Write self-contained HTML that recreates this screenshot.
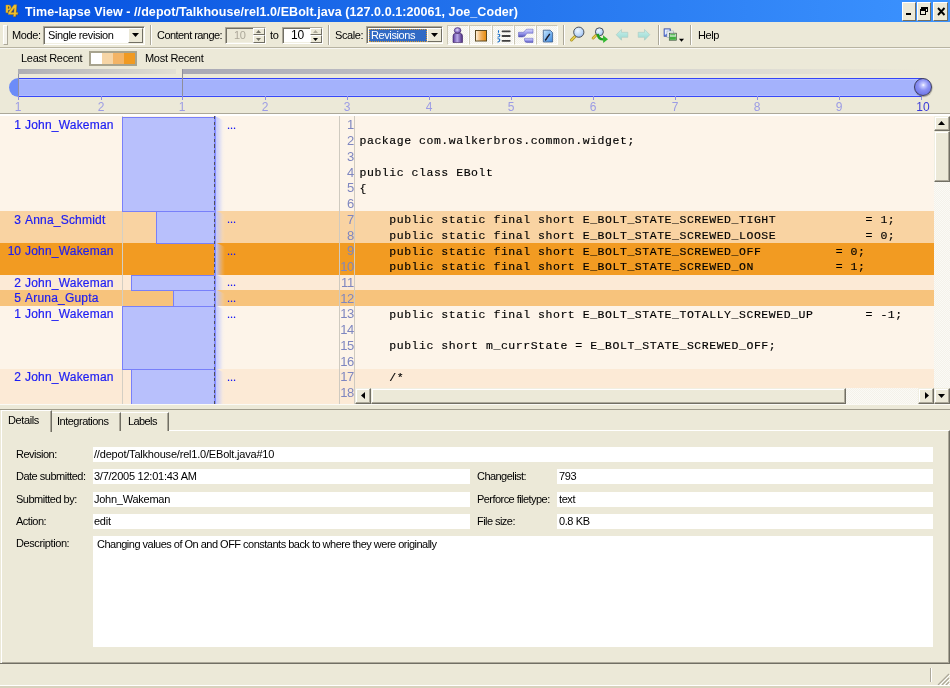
<!DOCTYPE html><html><head><meta charset="utf-8"><style>
*{margin:0;padding:0;box-sizing:border-box}
html,body{width:950px;height:688px;overflow:hidden;background:#ECE9D8;font-family:"Liberation Sans",sans-serif;font-size:11px;color:#000;position:relative}
.a{position:absolute}
#root{position:absolute;left:0;top:0;width:950px;height:688px;will-change:transform}
.tb{background:#ECE9D8;border-top:1px solid #fff;border-left:1px solid #fff;border-right:1px solid #716F64;border-bottom:1px solid #716F64}
.l{position:absolute;white-space:nowrap;letter-spacing:-0.4px;font-size:11px;line-height:13px}
.sep{position:absolute;top:25px;height:20px;width:2px;border-left:1px solid #ACA899;border-right:1px solid #fff}
.code{position:absolute;font-family:"Liberation Mono",monospace;-webkit-text-stroke:0.15px #000;font-size:11.5px;letter-spacing:0.54px;white-space:pre;color:#000;line-height:15.8px}
.ln{position:absolute;font-size:13px;letter-spacing:-0.3px;color:#7E86C0;text-align:right;width:20px;line-height:15.8px}
.ann{position:absolute;font-size:12px;color:#1C1CF4;-webkit-text-stroke:0.2px #1C1CF4;white-space:nowrap;line-height:15.8px}
.fld{position:absolute;background:#fff;height:15px}
.num{position:absolute;top:101.3px;font-size:12px;color:#9C9CE4;width:20px;text-align:center;line-height:12px}
.tick{position:absolute;top:96px;width:1px;height:4px;background:#8E8EE0}
</style></head><body><div id="root">
<div class="a" style="left:0;top:0;width:950px;height:22px;background:linear-gradient(to right,#0450E0 0%,#2272EC 50%,#3C93FF 100%)"></div>
<svg class="a" style="left:0;top:0" width="22" height="22"><g transform="translate(0.7,0.7)" fill="#3A2A40" opacity=".55"><path d="M5.9 5H9Q11 5 11 7.6Q11 10.3 8.6 10.3H8V12.8H5.9Z"/><path d="M14 4.8H16.7L16.1 12.5H17.8V14.4H15.9L15.7 16.6H13.4L13.7 14.4H8.3V12.6Z"/></g><g fill="#F2C22E" stroke="#B88A10" stroke-width=".4"><path d="M5.9 5H9Q11 5 11 7.6Q11 10.3 8.6 10.3H8V12.8H5.9Z M8 6.6V8.7H8.7Q9.3 8.7 9.3 7.6Q9.3 6.6 8.7 6.6Z" fill-rule="evenodd"/><path d="M14 4.8H16.7L16.1 12.5H17.8V14.4H15.9L15.7 16.6H13.4L13.7 14.4H8.3V12.6Z M14.2 8.2L10.9 12.6H13.9Z" fill-rule="evenodd"/></g></svg>
<div class="a" style="left:25px;top:4px;font:bold 12.5px Liberation Sans;color:#fff;letter-spacing:0.065px;white-space:nowrap;line-height:16px">Time-lapse View - //depot/Talkhouse/rel1.0/EBolt.java (127.0.0.1:20061, Joe_Coder)</div>
<div class="a tb" style="left:902px;top:2px;width:14px;height:19px"></div>
<div class="a tb" style="left:917px;top:2px;width:14px;height:19px"></div>
<div class="a tb" style="left:933px;top:2px;width:15px;height:19px"></div>
<div class="a" style="left:905.5px;top:12.5px;width:5.5px;height:2px;background:#000"></div>
<div class="a" style="left:921px;top:6.5px;width:7px;height:5px;border:1px solid #000;border-top-width:2px"></div>
<div class="a" style="left:919.5px;top:9px;width:6px;height:6px;border:1px solid #000;border-top-width:2px;background:#ECE9D8"></div>
<svg class="a" style="left:936.5px;top:6.5px" width="9" height="9"><path d="M1 1L7.5 8M7.5 1L1 8" stroke="#000" stroke-width="1.9"/></svg>
<div class="a" style="left:0;top:47px;width:950px;height:1px;background:#B8B4A2"></div>
<div class="a" style="left:0;top:48px;width:950px;height:1px;background:#F8F7F2"></div>
<div class="a" style="left:3px;top:25px;width:5px;height:20px;border:1px solid;border-color:#fff #ACA899 #ACA899 #fff;background:#F4F2EA"></div>
<div class="l" style="left:12px;top:29px">Mode:</div>
<div class="a" style="left:43px;top:26px;width:102px;height:18.5px;background:#fff;border-top:1px solid #ACA899;border-left:1px solid #ACA899;border-bottom:1px solid #fff;border-right:1px solid #fff;box-shadow:inset 1px 1px 0 #716F64,inset -1px -1px 0 #F1EFE2"></div>
<div class="l" style="left:48px;top:29px">Single revision</div>
<div class="a tb" style="left:127.5px;top:28px;width:15.5px;height:14.5px"></div>
<svg class="a" style="left:132px;top:33px" width="7" height="4"><path d="M0 0H7L3.5 4Z" fill="#000"/></svg>
<div class="sep" style="left:150px"></div>
<div class="l" style="left:157px;top:29px;letter-spacing:-0.55px">Content range:</div>
<div class="a" style="left:225px;top:27px;width:41px;height:17px;background:#ECE9D8;border-top:1px solid #ACA899;border-left:1px solid #ACA899;border-bottom:1px solid #fff;border-right:1px solid #fff;box-shadow:inset 1px 1px 0 #716F64,inset -1px -1px 0 #F1EFE2"></div>
<div class="l" style="left:234px;top:29px;color:#ACA899">10</div>
<div class="a" style="left:253px;top:28px;width:12px;height:7px;border:1px solid;border-color:#fff #716F64 #716F64 #fff"></div>
<div class="a" style="left:253px;top:35px;width:12px;height:8px;border:1px solid;border-color:#fff #716F64 #716F64 #fff"></div>
<svg class="a" style="left:256px;top:30px" width="5" height="3"><path d="M2.5 0L5 3H0Z" fill="#716F64"/></svg>
<svg class="a" style="left:256px;top:38px" width="5" height="3"><path d="M0 0H5L2.5 3Z" fill="#716F64"/></svg>
<div class="l" style="left:270px;top:29px">to</div>
<div class="a" style="left:282px;top:27px;width:41px;height:17px;background:#fff;border-top:1px solid #ACA899;border-left:1px solid #ACA899;border-bottom:1px solid #fff;border-right:1px solid #fff;box-shadow:inset 1px 1px 0 #716F64,inset -1px -1px 0 #F1EFE2"></div>
<div class="l" style="left:291px;top:28.5px;font-size:12px;letter-spacing:-0.2px">10</div>
<div class="a" style="left:310px;top:28px;width:12px;height:7px;border:1px solid;border-color:#fff #716F64 #716F64 #fff;background:#ECE9D8"></div>
<div class="a" style="left:310px;top:35px;width:12px;height:8px;border:1px solid;border-color:#fff #716F64 #716F64 #fff;background:#ECE9D8"></div>
<svg class="a" style="left:313px;top:30px" width="5" height="3"><path d="M2.5 0L5 3H0Z" fill="#ACA899"/></svg>
<svg class="a" style="left:313px;top:38px" width="5" height="3"><path d="M0 0H5L2.5 3Z" fill="#000"/></svg>
<div class="sep" style="left:328px"></div>
<div class="l" style="left:335px;top:29px">Scale:</div>
<div class="a" style="left:366px;top:26px;width:77px;height:18px;background:#fff;border-top:1px solid #ACA899;border-left:1px solid #ACA899;border-bottom:1px solid #fff;border-right:1px solid #fff;box-shadow:inset 1px 1px 0 #716F64,inset -1px -1px 0 #F1EFE2"></div>
<div class="a" style="left:368.5px;top:29px;width:58.5px;height:13px;background:#316AC5;border:1px dotted #D89A30"></div>
<div class="l" style="left:371px;top:28.5px;color:#fff">Revisions</div>
<div class="a tb" style="left:427px;top:28px;width:15px;height:14px"></div>
<svg class="a" style="left:431px;top:33px" width="7" height="4"><path d="M0 0H7L3.5 4Z" fill="#000"/></svg>
<div class="a" style="left:447px;top:25px;width:22px;height:20px;border-top:1px solid #CBC7B4;border-left:1px solid #CBC7B4;border-right:1px solid #fff;border-bottom:1px solid #fff;background:repeating-conic-gradient(#F3F2EB 0 25%,#FCFBF8 0 50%) 0 0/2px 2px"></div>
<div class="a" style="left:469px;top:25px;width:23px;height:20px;border-top:1px solid #CBC7B4;border-left:1px solid #CBC7B4;border-right:1px solid #fff;border-bottom:1px solid #fff;background:repeating-conic-gradient(#F3F2EB 0 25%,#FCFBF8 0 50%) 0 0/2px 2px"></div>
<div class="a" style="left:492px;top:25px;width:22px;height:20px;border-top:1px solid #CBC7B4;border-left:1px solid #CBC7B4;border-right:1px solid #fff;border-bottom:1px solid #fff;background:repeating-conic-gradient(#F3F2EB 0 25%,#FCFBF8 0 50%) 0 0/2px 2px"></div>
<div class="a" style="left:514px;top:25px;width:22px;height:20px;border-top:1px solid #CBC7B4;border-left:1px solid #CBC7B4;border-right:1px solid #fff;border-bottom:1px solid #fff;background:repeating-conic-gradient(#F3F2EB 0 25%,#FCFBF8 0 50%) 0 0/2px 2px"></div>
<div class="a" style="left:536px;top:25px;width:22px;height:20px;border-top:1px solid #CBC7B4;border-left:1px solid #CBC7B4;border-right:1px solid #fff;border-bottom:1px solid #fff;background:repeating-conic-gradient(#F3F2EB 0 25%,#FCFBF8 0 50%) 0 0/2px 2px"></div>
<svg class="a" style="left:0;top:0" width="950" height="47">
<defs>
<linearGradient id="gp" x1="0" y1="0" x2="1" y2="0"><stop offset="0" stop-color="#5A3A98"/><stop offset=".45" stop-color="#B8A8E8"/><stop offset="1" stop-color="#4A2A80"/></linearGradient>
<radialGradient id="gh" cx=".45" cy=".4" r=".7"><stop offset="0" stop-color="#E8E0FF"/><stop offset=".5" stop-color="#9078C8"/><stop offset="1" stop-color="#4A2A80"/></radialGradient>
<linearGradient id="go" x1="0" y1="0" x2="1" y2="0"><stop offset="0" stop-color="#FFF4E0"/><stop offset=".5" stop-color="#F0B060"/><stop offset="1" stop-color="#E88A08"/></linearGradient>
<linearGradient id="gb" x1="0" y1="0" x2="0" y2="1"><stop offset="0" stop-color="#D8D8FF"/><stop offset=".6" stop-color="#9090E8"/><stop offset="1" stop-color="#5050B0"/></linearGradient>
<linearGradient id="gd" x1="0" y1="0" x2="1" y2="1"><stop offset="0" stop-color="#C8E8FF"/><stop offset="1" stop-color="#3A88E0"/></linearGradient>
<radialGradient id="gl" cx=".4" cy=".35" r=".7"><stop offset="0" stop-color="#F0F8FF"/><stop offset=".7" stop-color="#B8D4F8"/><stop offset="1" stop-color="#90B0E8"/></radialGradient>
<linearGradient id="ga" x1="0" y1="0" x2="0" y2="1"><stop offset="0" stop-color="#C8F0EC"/><stop offset="1" stop-color="#98D8D0"/></linearGradient>
</defs>
<!-- person -->
<path d="M453 42.5V36Q453 33.2 456 33.2H459.5Q462.5 33.2 462.5 36V42.5Z" fill="url(#gp)" stroke="#3A2060" stroke-width=".6"/>
<ellipse cx="457.6" cy="30.5" rx="3.4" ry="2.9" fill="url(#gh)" stroke="#3A2060" stroke-width=".5"/>
<!-- orange square -->
<rect x="475.5" y="30.5" width="11" height="10.5" fill="url(#go)" stroke="#5A4820" stroke-width="1"/>
<!-- list -->
<path d="M502.5 31.3H509.8M502.5 36H509.8M502.5 40.8H509.8" stroke="#404040" stroke-width="1.8" stroke-linecap="round"/>
<path d="M498.5 30.2V32.8M497.5 34.3Q499.8 34 499.8 35.5Q499.8 37 497.5 37.2M497.5 38.8Q499.8 38.5 499.8 40Q499.8 41.5 497.5 42.3" stroke="#1A70C8" stroke-width="1.1" fill="none"/>
<!-- branch -->
<path d="M518.5 32.3H522.5Q524.5 32.3 525 30.8Q525.6 29.2 527.5 29.2H533V33.2H527.6Q526.5 33.2 526 34.6Q525.2 37 522.5 37H518.5Z" fill="url(#gb)" stroke="#5858B8" stroke-width=".5"/>
<path d="M524.5 38.3H533V42.5H527Q524.5 42.5 524.5 40Z" fill="url(#gb)" stroke="#5858B8" stroke-width=".5"/>
<!-- doc -->
<path d="M543.3 30.2H550.2L552.6 32.6V42H543.3Z" fill="url(#gd)" stroke="#3A5A88" stroke-width=".8"/>
<path d="M545.2 40.5L549.8 33.8M546.8 38.3L547.6 36.6" stroke="#1A1A2A" stroke-width="1.4"/>
<!-- magnifier -->
<path d="M571.5 40L575 36.5" stroke="#A89020" stroke-width="3" stroke-linecap="round"/>
<path d="M571.5 40L575 36.5" stroke="#E8D050" stroke-width="1.6" stroke-linecap="round"/>
<circle cx="578.8" cy="32.2" r="5.1" fill="url(#gl)" stroke="#4A5058" stroke-width="1"/>
<!-- find next -->
<path d="M593 38.2L596 35.3" stroke="#A89020" stroke-width="2.6" stroke-linecap="round"/>
<path d="M593 38.2L596 35.3" stroke="#E8D050" stroke-width="1.3" stroke-linecap="round"/>
<circle cx="599.4" cy="31.8" r="4" fill="url(#gl)" stroke="#4A5058" stroke-width="1"/>
<path d="M597.8 33.8Q598.2 39.5 603.5 39.4" stroke="#20A020" stroke-width="2.4" fill="none"/>
<path d="M603 35.2L608 39.2L603.2 43Z" fill="#30B830"/>
<!-- back / fwd -->
<path d="M616.2 34.7L621.5 29.4V32.3H627.8V37.3H621.5V40.2Z" fill="url(#ga)" stroke="#A8C8C0" stroke-width=".6"/>
<path d="M649.8 34.7L644.5 29.4V32.3H638.2V37.3H644.5V40.2Z" fill="url(#ga)" stroke="#A8C8C0" stroke-width=".6"/>
<!-- multi doc -->
<rect x="664" y="28.8" width="6.6" height="7.5" fill="#5A78D8" stroke="#3A4A98" stroke-width=".6"/>
<path d="M664.8 29.5H669.5V32L664.8 35Z" fill="#E8F0FF"/>
<rect x="667" y="31" width="6.5" height="6.5" fill="#F0F4F8" stroke="#8898A8" stroke-width=".5"/>
<rect x="669.3" y="33.2" width="7" height="7" fill="#E8F4E8" stroke="#2A4A2A" stroke-width=".7"/><rect x="669.7" y="36.6" width="6.2" height="3.2" fill="#40B040"/>
<rect x="670.2" y="34" width="5.2" height="1.5" fill="#60C060"/>
<path d="M679 38.7H684L681.5 41.7Z" fill="#000"/>
</svg>
<div class="sep" style="left:563px"></div>
<div class="sep" style="left:658px"></div>
<div class="sep" style="left:690px"></div>
<div class="l" style="left:698px;top:29px">Help</div>
<div class="l" style="left:21px;top:52px;letter-spacing:-0.3px">Least Recent</div>
<div class="a" style="left:89px;top:51px;width:48px;height:15px;border:2px solid #A7A38E;background:linear-gradient(to right,#fff 0,#fff 11px,#F6D5A6 11px,#F6D5A6 22px,#F3B466 22px,#F3B466 33px,#F09A22 33px)"></div>
<div class="l" style="left:145px;top:52px;letter-spacing:-0.3px">Most Recent</div>
<div class="a" style="left:18px;top:69px;width:158px;height:5px;background:linear-gradient(to right,#ADADB4,#E2E0D4)"></div>
<div class="a" style="left:182px;top:69px;width:740px;height:5px;background:linear-gradient(to right,#A8A8B4,#C4C4C8 35%,#DCDAD2 75%,#ECE9D8)"></div>
<div class="a" style="left:8.5px;top:78px;width:19px;height:19px;border-radius:50%;background:#6C8CF8"></div>
<div class="a" style="left:18px;top:77.5px;width:904px;height:19px;background:#A4B2FC;border-top:1.2px solid #3444F8;border-bottom:1.6px solid #3848F8;box-shadow:inset 0 1px 0 #B8C4FF,inset 0 -1px 0 #B0BCFF"></div>
<div class="a" style="left:18px;top:74px;width:1px;height:26px;background:#9090A8"></div>
<div class="a" style="left:182px;top:69px;width:1px;height:31px;background:#8E8E9A"></div>
<div class="tick" style="left:18px"></div>
<div class="num" style="left:8px;color:#9C9CE4">1</div>
<div class="tick" style="left:101px"></div>
<div class="num" style="left:91px;color:#9C9CE4">2</div>
<div class="tick" style="left:182px"></div>
<div class="num" style="left:172px;color:#9C9CE4">1</div>
<div class="tick" style="left:265px"></div>
<div class="num" style="left:255px;color:#9C9CE4">2</div>
<div class="tick" style="left:347px"></div>
<div class="num" style="left:337px;color:#9C9CE4">3</div>
<div class="tick" style="left:429px"></div>
<div class="num" style="left:419px;color:#9C9CE4">4</div>
<div class="tick" style="left:511px"></div>
<div class="num" style="left:501px;color:#9C9CE4">5</div>
<div class="tick" style="left:593px"></div>
<div class="num" style="left:583px;color:#9C9CE4">6</div>
<div class="tick" style="left:675px"></div>
<div class="num" style="left:665px;color:#9C9CE4">7</div>
<div class="tick" style="left:757px"></div>
<div class="num" style="left:747px;color:#9C9CE4">8</div>
<div class="tick" style="left:839px"></div>
<div class="num" style="left:829px;color:#9C9CE4">9</div>
<div class="tick" style="left:921px"></div>
<div class="num" style="left:913px;color:#3A3AD8">10</div>
<div class="a" style="left:913.5px;top:78px;width:18px;height:18px;border-radius:50%;border:1px solid #3C3C5C;background:radial-gradient(circle at 52% 38%,#FFFFFF 0,#C8CCFF 12%,#8C92F4 40%,#7078E8 75%,#5A60C8 100%);box-shadow:0.5px 1px 1px rgba(0,0,0,.35)"></div>
<div class="a" style="left:0;top:113px;width:950px;height:1px;background:#ACA899"></div>
<div class="a" style="left:0;top:114px;width:950px;height:2px;background:#fff"></div>
<div class="a" style="left:0;top:116px;width:934px;height:288px;overflow:hidden;background:#FDF4E9">
<div class="a" style="left:0;top:1px;width:934px;height:94px;background:#FDF4E9"></div>
<div class="a" style="left:0;top:95px;width:934px;height:32px;background:#F9D3A2"></div>
<div class="a" style="left:0;top:127px;width:934px;height:32px;background:#F29B22"></div>
<div class="a" style="left:0;top:159px;width:934px;height:15px;background:#FCEAD6"></div>
<div class="a" style="left:0;top:174px;width:934px;height:16px;background:#F7C37C"></div>
<div class="a" style="left:0;top:190px;width:934px;height:63px;background:#FDF4E9"></div>
<div class="a" style="left:0;top:253px;width:934px;height:61px;background:#FCEAD6"></div>
<div class="a" style="left:122px;top:0;width:1px;height:289px;background:#D4CFC4"></div>
<div class="a" style="left:122px;top:1px;width:93px;height:95px;background:#B8C0FC;border:1px solid #7880FA;border-right:none"></div>
<div class="a" style="left:156px;top:95px;width:59px;height:33px;background:#B8C0FC;border:1px solid #7880FA;border-right:none"></div>
<div class="a" style="left:131px;top:159px;width:84px;height:16px;background:#B8C0FC;border:1px solid #7880FA;border-right:none"></div>
<div class="a" style="left:173px;top:174px;width:42px;height:17px;background:#B8C0FC;border:1px solid #7880FA;border-right:none"></div>
<div class="a" style="left:122px;top:190px;width:93px;height:64px;background:#B8C0FC;border:1px solid #7880FA;border-right:none"></div>
<div class="a" style="left:131px;top:253px;width:84px;height:62px;background:#B8C0FC;border:1px solid #7880FA;border-right:none"></div>
<div class="a" style="left:214px;top:0;width:2px;height:289px;background:#8890FF"></div>
<div class="a" style="left:214px;top:0;width:1px;height:289px;background:repeating-linear-gradient(to bottom,#505058 0,#505058 3px,transparent 3px,transparent 5.7px)"></div>
<div class="a" style="left:216px;top:1px;width:9px;height:94px;background:linear-gradient(to right,rgba(192,200,255,.95),rgba(192,200,255,.55) 35%,rgba(220,225,255,.15) 75%,rgba(255,255,255,0));clip-path:polygon(0 0,1px 0,100% 4px,100% 100%,0 100%)"></div>
<div class="a" style="left:216px;top:95px;width:9px;height:32px;background:linear-gradient(to right,rgba(192,200,255,.95),rgba(192,200,255,.55) 35%,rgba(220,225,255,.15) 75%,rgba(255,255,255,0));clip-path:polygon(0 0,1px 0,100% 4px,100% 100%,0 100%)"></div>
<div class="a" style="left:216px;top:127px;width:9px;height:32px;background:linear-gradient(to right,rgba(192,200,255,.95),rgba(192,200,255,.55) 35%,rgba(220,225,255,.15) 75%,rgba(255,255,255,0));clip-path:polygon(0 0,1px 0,100% 4px,100% 100%,0 100%)"></div>
<div class="a" style="left:216px;top:159px;width:9px;height:15px;background:linear-gradient(to right,rgba(192,200,255,.95),rgba(192,200,255,.55) 35%,rgba(220,225,255,.15) 75%,rgba(255,255,255,0));clip-path:polygon(0 0,1px 0,100% 4px,100% 100%,0 100%)"></div>
<div class="a" style="left:216px;top:174px;width:9px;height:16px;background:linear-gradient(to right,rgba(192,200,255,.95),rgba(192,200,255,.55) 35%,rgba(220,225,255,.15) 75%,rgba(255,255,255,0));clip-path:polygon(0 0,1px 0,100% 4px,100% 100%,0 100%)"></div>
<div class="a" style="left:216px;top:190px;width:9px;height:63px;background:linear-gradient(to right,rgba(192,200,255,.95),rgba(192,200,255,.55) 35%,rgba(220,225,255,.15) 75%,rgba(255,255,255,0));clip-path:polygon(0 0,1px 0,100% 4px,100% 100%,0 100%)"></div>
<div class="a" style="left:216px;top:253px;width:9px;height:61px;background:linear-gradient(to right,rgba(192,200,255,.95),rgba(192,200,255,.55) 35%,rgba(220,225,255,.15) 75%,rgba(255,255,255,0));clip-path:polygon(0 0,1px 0,100% 4px,100% 100%,0 100%)"></div>
<div class="ann" style="left:0;top:2.00px;width:21px;text-align:right">1</div>
<div class="ann" style="left:25px;top:2.00px;letter-spacing:0.2px">John_Wakeman</div>
<div class="ann" style="left:227px;top:1.50px;font-size:11px">...</div>
<div class="ann" style="left:0;top:96.50px;width:21px;text-align:right">3</div>
<div class="ann" style="left:25px;top:96.50px;letter-spacing:0.2px">Anna_Schmidt</div>
<div class="ann" style="left:227px;top:96.00px;font-size:11px">...</div>
<div class="ann" style="left:0;top:128.00px;width:21px;text-align:right">10</div>
<div class="ann" style="left:25px;top:128.00px;letter-spacing:0.2px">John_Wakeman</div>
<div class="ann" style="left:227px;top:127.50px;font-size:11px">...</div>
<div class="ann" style="left:0;top:159.50px;width:21px;text-align:right">2</div>
<div class="ann" style="left:25px;top:159.50px;letter-spacing:0.2px">John_Wakeman</div>
<div class="ann" style="left:227px;top:159.00px;font-size:11px">...</div>
<div class="ann" style="left:0;top:175.25px;width:21px;text-align:right">5</div>
<div class="ann" style="left:25px;top:175.25px;letter-spacing:0.2px">Aruna_Gupta</div>
<div class="ann" style="left:227px;top:174.75px;font-size:11px">...</div>
<div class="ann" style="left:0;top:191.00px;width:21px;text-align:right">1</div>
<div class="ann" style="left:25px;top:191.00px;letter-spacing:0.2px">John_Wakeman</div>
<div class="ann" style="left:227px;top:190.50px;font-size:11px">...</div>
<div class="ann" style="left:0;top:254.00px;width:21px;text-align:right">2</div>
<div class="ann" style="left:25px;top:254.00px;letter-spacing:0.2px">John_Wakeman</div>
<div class="ann" style="left:227px;top:253.50px;font-size:11px">...</div>
<div class="a" style="left:339px;top:0;width:1px;height:289px;background:#CFCAC0"></div>
<div class="a" style="left:354px;top:0;width:1px;height:289px;background:#CFCAC0"></div>
<div class="ln" style="left:334px;top:1.30px">1</div>
<div class="ln" style="left:334px;top:17.05px">2</div>
<div class="ln" style="left:334px;top:32.80px">3</div>
<div class="ln" style="left:334px;top:48.55px">4</div>
<div class="ln" style="left:334px;top:64.30px">5</div>
<div class="ln" style="left:334px;top:80.05px">6</div>
<div class="ln" style="left:334px;top:95.80px">7</div>
<div class="ln" style="left:334px;top:111.55px">8</div>
<div class="ln" style="left:334px;top:127.30px">9</div>
<div class="ln" style="left:334px;top:143.05px">10</div>
<div class="ln" style="left:334px;top:158.80px">11</div>
<div class="ln" style="left:334px;top:174.55px">12</div>
<div class="ln" style="left:334px;top:190.30px">13</div>
<div class="ln" style="left:334px;top:206.05px">14</div>
<div class="ln" style="left:334px;top:221.80px">15</div>
<div class="ln" style="left:334px;top:237.55px">16</div>
<div class="ln" style="left:334px;top:253.30px">17</div>
<div class="ln" style="left:334px;top:269.05px">18</div>
<div class="ln" style="left:334px;top:284.80px">19</div>
<div class="code" style="left:359.5px;top:17.45px">package com.walkerbros.common.widget;</div>
<div class="code" style="left:359.5px;top:48.95px">public class EBolt</div>
<div class="code" style="left:359.5px;top:64.70px">{</div>
<div class="code" style="left:359.5px;top:96.20px">    public static final short E_BOLT_STATE_SCREWED_TIGHT            = 1;</div>
<div class="code" style="left:359.5px;top:111.95px">    public static final short E_BOLT_STATE_SCREWED_LOOSE            = 0;</div>
<div class="code" style="left:359.5px;top:127.70px">    public static final short E_BOLT_STATE_SCREWED_OFF          = 0;</div>
<div class="code" style="left:359.5px;top:143.45px">    public static final short E_BOLT_STATE_SCREWED_ON           = 1;</div>
<div class="code" style="left:359.5px;top:190.70px">    public static final short E_BOLT_STATE_TOTALLY_SCREWED_UP       = -1;</div>
<div class="code" style="left:359.5px;top:222.20px">    public short m_currState = E_BOLT_STATE_SCREWED_OFF;</div>
<div class="code" style="left:359.5px;top:253.70px">    /*</div>
</div>
<div class="a" style="left:934px;top:116px;width:16px;height:272px;background:repeating-conic-gradient(#F4F2EA 0 25%,#FBFAF6 0 50%) 0 0/2px 2px"></div>
<div class="a" style="left:934px;top:116px;width:16px;height:15px;background:#ECE9D8;border-top:1px solid #F1EFE2;border-left:1px solid #F1EFE2;border-right:1px solid #716F64;border-bottom:1px solid #716F64;box-shadow:inset -1px -1px 0 #ACA899,inset 1px 1px 0 #fff"></div>
<svg class="a" style="left:938px;top:121px" width="7" height="4"><path d="M3.5 0L7 4H0Z" fill="#000"/></svg>
<div class="a" style="left:934px;top:131px;width:16px;height:51px;background:#ECE9D8;border-top:1px solid #F1EFE2;border-left:1px solid #F1EFE2;border-right:1px solid #716F64;border-bottom:1px solid #716F64;box-shadow:inset -1px -1px 0 #ACA899,inset 1px 1px 0 #fff"></div>
<div class="a" style="left:355px;top:388px;width:579px;height:16px;background:repeating-conic-gradient(#F4F2EA 0 25%,#FBFAF6 0 50%) 0 0/2px 2px"></div>
<div class="a" style="left:355px;top:388px;width:16px;height:16px;background:#ECE9D8;border-top:1px solid #F1EFE2;border-left:1px solid #F1EFE2;border-right:1px solid #716F64;border-bottom:1px solid #716F64;box-shadow:inset -1px -1px 0 #ACA899,inset 1px 1px 0 #fff"></div>
<svg class="a" style="left:361px;top:392px" width="4" height="7"><path d="M0 3.5L4 0V7Z" fill="#000"/></svg>
<div class="a" style="left:371px;top:388px;width:475px;height:16px;background:#ECE9D8;border-top:1px solid #F1EFE2;border-left:1px solid #F1EFE2;border-right:1px solid #716F64;border-bottom:1px solid #716F64;box-shadow:inset -1px -1px 0 #ACA899,inset 1px 1px 0 #fff"></div>
<div class="a" style="left:918px;top:388px;width:16px;height:16px;background:#ECE9D8;border-top:1px solid #F1EFE2;border-left:1px solid #F1EFE2;border-right:1px solid #716F64;border-bottom:1px solid #716F64;box-shadow:inset -1px -1px 0 #ACA899,inset 1px 1px 0 #fff"></div>
<svg class="a" style="left:925px;top:392px" width="4" height="7"><path d="M4 3.5L0 0V7Z" fill="#000"/></svg>
<div class="a" style="left:934px;top:388px;width:16px;height:16px;background:#ECE9D8;border-top:1px solid #F1EFE2;border-left:1px solid #F1EFE2;border-right:1px solid #716F64;border-bottom:1px solid #716F64;box-shadow:inset -1px -1px 0 #ACA899,inset 1px 1px 0 #fff"></div>
<svg class="a" style="left:938px;top:394px" width="7" height="4"><path d="M0 0H7L3.5 4Z" fill="#000"/></svg>
<div class="a" style="left:0;top:404px;width:950px;height:1px;background:#FBFAF5"></div>
<div class="a" style="left:0;top:409px;width:950px;height:1px;background:#A09C8C"></div>
<div class="a" style="left:1px;top:430px;width:949px;height:234px;border-left:1px solid #fff;border-top:1px solid #fff;border-right:1px solid #716F64;border-bottom:1px solid #716F64;box-shadow:inset -1px -1px 0 #ACA899"></div>
<div class="a" style="left:0;top:663px;width:950px;height:1px;background:#716F64"></div>
<div class="a" style="left:51px;top:412px;width:70px;height:19px;border-left:1px solid #fff;border-top:1px solid #fff;border-right:1px solid #716F64;box-shadow:inset -1px 0 0 #ACA899;background:#ECE9D8"></div>
<div class="a" style="left:121px;top:412px;width:48px;height:19px;border-top:1px solid #fff;border-right:1px solid #716F64;box-shadow:inset -1px 0 0 #ACA899;background:#ECE9D8"></div>
<div class="a" style="left:1px;top:410px;width:51px;height:22px;border-left:1px solid #fff;border-top:1px solid #fff;border-right:1px solid #716F64;box-shadow:inset -1px 0 0 #ACA899;background:#ECE9D8"></div>
<div class="l" style="left:8px;top:414px">Details</div>
<div class="l" style="left:57px;top:415px;letter-spacing:-0.5px">Integrations</div>
<div class="l" style="left:128px;top:415px;letter-spacing:-0.6px">Labels</div>
<div class="l" style="left:16px;top:448px;letter-spacing:-0.5px">Revision:</div>
<div class="fld" style="left:93px;top:447px;width:840px"></div>
<div class="l" style="left:94px;top:448px;letter-spacing:-0.2px">//depot/Talkhouse/rel1.0/EBolt.java#10</div>
<div class="l" style="left:16px;top:470px;letter-spacing:-0.5px">Date submitted:</div>
<div class="fld" style="left:93px;top:469px;width:377px"></div>
<div class="l" style="left:94px;top:470px;letter-spacing:-0.25px">3/7/2005 12:01:43 AM</div>
<div class="l" style="left:16px;top:492.5px;letter-spacing:-0.5px">Submitted by:</div>
<div class="fld" style="left:93px;top:491.5px;width:377px"></div>
<div class="l" style="left:94px;top:492.5px;letter-spacing:-0.25px">John_Wakeman</div>
<div class="l" style="left:16px;top:514.5px;letter-spacing:-0.5px">Action:</div>
<div class="fld" style="left:93px;top:513.5px;width:377px"></div>
<div class="l" style="left:94px;top:514.5px;letter-spacing:-0.25px">edit</div>
<div class="l" style="left:477px;top:470px;letter-spacing:-0.55px">Changelist:</div>
<div class="fld" style="left:557px;top:469px;width:376px"></div>
<div class="l" style="left:559px;top:470px">793</div>
<div class="l" style="left:477px;top:492.5px;letter-spacing:-0.55px">Perforce filetype:</div>
<div class="fld" style="left:557px;top:491.5px;width:376px"></div>
<div class="l" style="left:559px;top:492.5px">text</div>
<div class="l" style="left:477px;top:514.5px;letter-spacing:-0.55px">File size:</div>
<div class="fld" style="left:557px;top:513.5px;width:376px"></div>
<div class="l" style="left:559px;top:514.5px">0.8 KB</div>
<div class="l" style="left:16px;top:537px">Description:</div>
<div class="fld" style="left:93px;top:536px;width:840px;height:111px"></div>
<div class="l" style="left:97px;top:538px;letter-spacing:-0.51px">Changing values of On and OFF constants back to where they were originally</div>
<div class="a" style="left:0;top:685px;width:950px;height:1px;background:#fff"></div>
<div class="a" style="left:0;top:686px;width:950px;height:2px;background:#D8D2BD"></div>
<div class="a" style="left:930px;top:668px;width:2px;height:14px;border-left:1px solid #ACA899;border-right:1px solid #fff"></div>
<svg class="a" style="left:937px;top:673px" width="13" height="12"><path d="M12 1L1 12M12 5L5 12M12 9L9 12" stroke="#ACA899" stroke-width="1.2"/><path d="M13 2L2 13M13 6L6 13M13 10L10 13" stroke="#fff" stroke-width="1"/></svg>
</div></body></html>
